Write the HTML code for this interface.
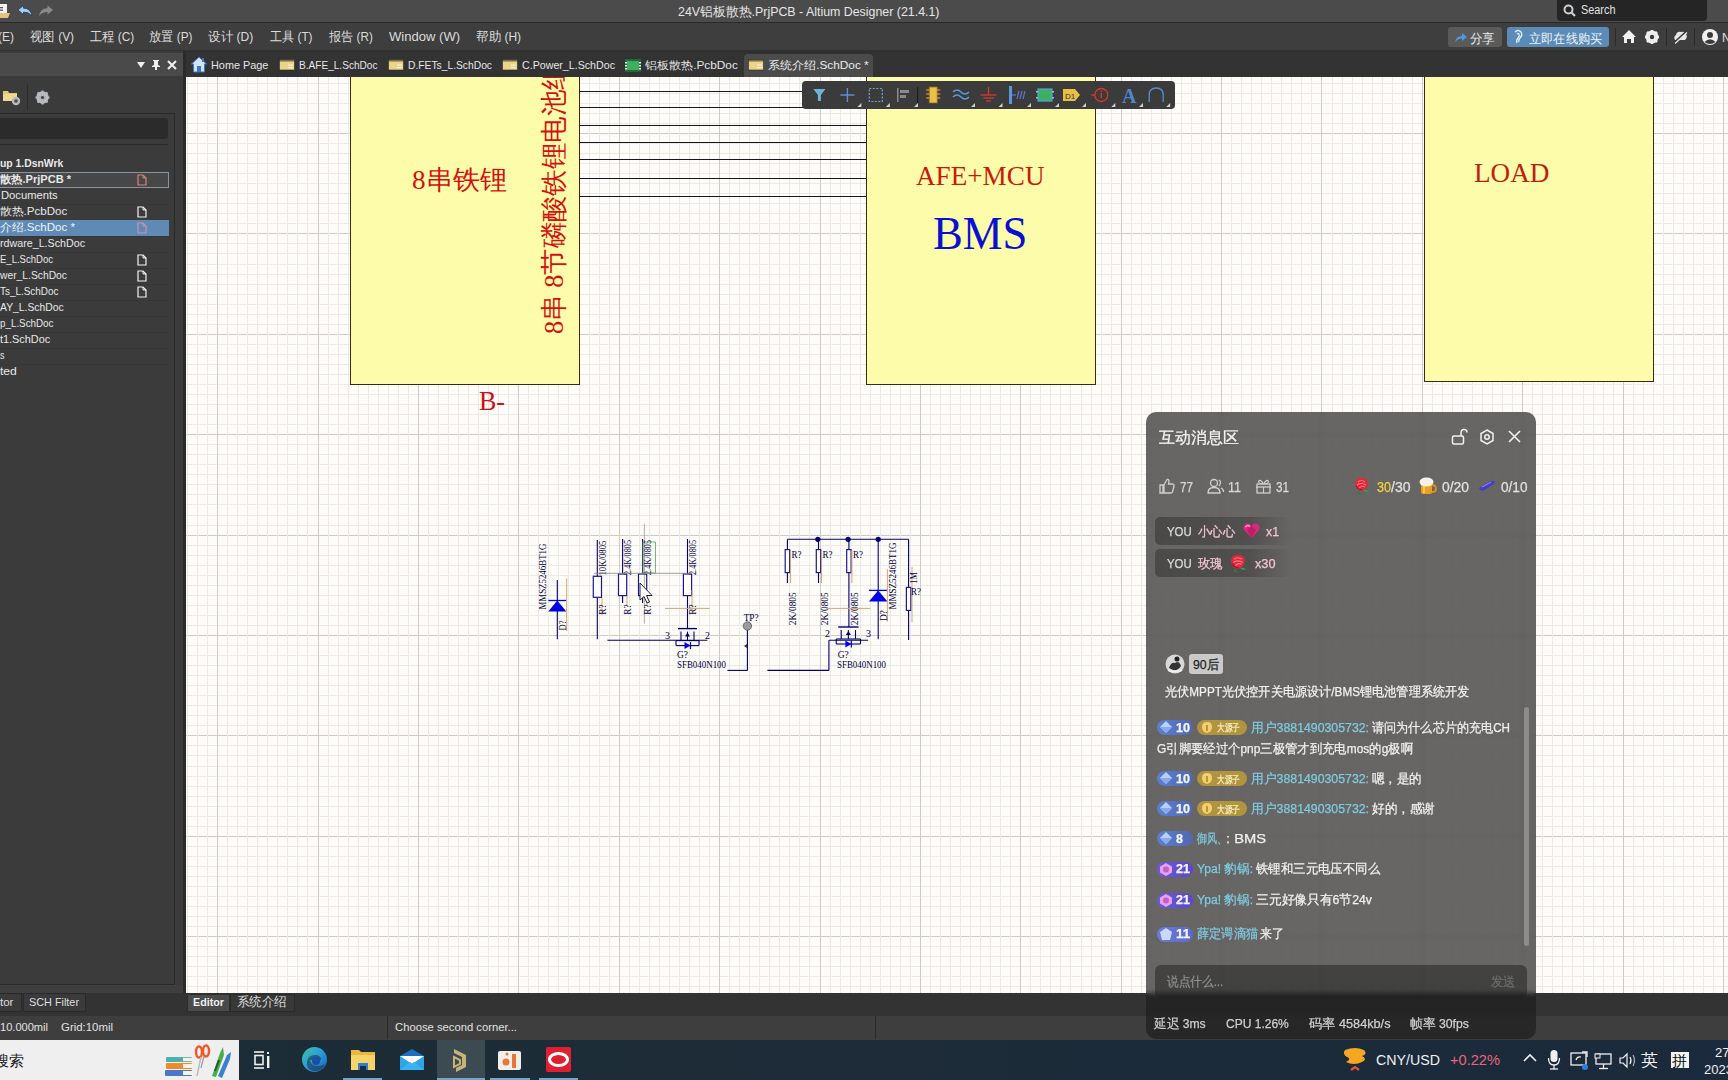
<!DOCTYPE html>
<html><head><meta charset="utf-8">
<style>
*{box-sizing:border-box;margin:0;padding:0}
html,body{width:1728px;height:1080px;overflow:hidden;background:#333;font-family:"Liberation Sans",sans-serif;color:#ddd}
.a{position:absolute}
.t{position:absolute;white-space:nowrap;line-height:1}
.serif{font-family:"Liberation Serif",serif}
</style></head><body>
<div class="a" style="left:0px;top:0px;width:1728px;height:22px;background:#4b4b4b"></div><div class="a" style="left:0px;top:22px;width:1728px;height:1px;background:#2a2a2a"></div><div class="t" style="transform:scaleX(0.9909);transform-origin:0 0;left:678.00px;top:5.82px;font-family:'Liberation Sans',sans-serif;font-size:12.5px;font-weight:normal;color:#e6e6e6;">24V铝板散热.PrjPCB - Altium Designer (21.4.1)</div><div class="a" style="left:1557px;top:0px;width:150px;height:20.5px;background:#252525;border-radius:0 0 4px 4px"></div><svg class="a" style="left:1563px;top:4px" width="13" height="13"><circle cx="5.5" cy="5.5" r="4" stroke="#cfcfcf" stroke-width="2" fill="none"/><line x1="8.5" y1="8.5" x2="12" y2="12" stroke="#cfcfcf" stroke-width="2.2"/></svg><div class="t" style="transform:scaleX(0.9071);transform-origin:0 0;left:1580.50px;top:4.04px;font-family:'Liberation Sans',sans-serif;font-size:12px;font-weight:normal;color:#e0e0e0;">Search</div><div class="a" style="left:0px;top:23px;width:1728px;height:26.5px;background:#3e3e3e"></div><div class="t" style="transform:scaleX(0.9597);transform-origin:0 0;left:-2.00px;top:31.12px;font-family:'Liberation Sans',sans-serif;font-size:12.5px;font-weight:normal;color:#dcdcdc;">(E)</div><div class="t" style="transform:scaleX(0.9558);transform-origin:0 0;left:29.50px;top:31.12px;font-family:'Liberation Sans',sans-serif;font-size:12.5px;font-weight:normal;color:#dcdcdc;">视图 (V)</div><div class="t" style="transform:scaleX(0.9417);transform-origin:0 0;left:89.60px;top:31.12px;font-family:'Liberation Sans',sans-serif;font-size:12.5px;font-weight:normal;color:#dcdcdc;">工程 (C)</div><div class="t" style="transform:scaleX(0.9406);transform-origin:0 0;left:149.30px;top:31.12px;font-family:'Liberation Sans',sans-serif;font-size:12.5px;font-weight:normal;color:#dcdcdc;">放置 (P)</div><div class="t" style="transform:scaleX(0.9652);transform-origin:0 0;left:208.30px;top:31.12px;font-family:'Liberation Sans',sans-serif;font-size:12.5px;font-weight:normal;color:#dcdcdc;">设计 (D)</div><div class="t" style="transform:scaleX(0.9354);transform-origin:0 0;left:270.00px;top:31.12px;font-family:'Liberation Sans',sans-serif;font-size:12.5px;font-weight:normal;color:#dcdcdc;">工具 (T)</div><div class="t" style="transform:scaleX(0.9353);transform-origin:0 0;left:328.80px;top:31.12px;font-family:'Liberation Sans',sans-serif;font-size:12.5px;font-weight:normal;color:#dcdcdc;">报告 (R)</div><div class="t" style="transform:scaleX(1.0446);transform-origin:0 0;left:388.90px;top:31.12px;font-family:'Liberation Sans',sans-serif;font-size:12.5px;font-weight:normal;color:#dcdcdc;">Window (W)</div><div class="t" style="transform:scaleX(0.9631);transform-origin:0 0;left:475.70px;top:31.12px;font-family:'Liberation Sans',sans-serif;font-size:12.5px;font-weight:normal;color:#dcdcdc;">帮助 (H)</div><div class="a" style="left:0px;top:49.5px;width:1728px;height:28.5px;background:#333333"></div><div class="a" style="left:0px;top:49.5px;width:1728px;height:3.5px;background:#303030"></div><svg class="a" style="left:0;top:2px" width="60" height="18"><rect x="-3" y="2" width="10" height="9" fill="#f4f4f4"/><rect x="-2" y="5" width="5" height="1.3" fill="#555"/><rect x="-2" y="7.5" width="5" height="1.3" fill="#555"/><path d="M-3 11 L10 11 L8 16 L-3 16 Z" fill="#e6c27a"/><path d="M18 8 L23.5 3.5 L23.5 6.2 Q30.5 6 32 14 Q29 10 23.5 10 L23.5 12.5 Z" fill="#a9cdf2" stroke="#1d3f6a" stroke-width="0.8"/><path d="M53 8 L47.5 3.5 L47.5 6.2 Q40.5 6 39 14 Q42 10 47.5 10 L47.5 12.5 Z" fill="#8a8a8a"/></svg><div class="a" style="left:1448px;top:27px;width:54px;height:20px;background:#5a5a5a;border-radius:3px"></div><svg class="a" style="left:1454px;top:31px" width="14" height="12"><path d="M1 11 Q2 5 8 5 L8 2 L13 6 L8 10 L8 7.5 Q4 7.5 1 11Z" fill="#4d9be0"/></svg><div class="t" style="transform:scaleX(0.9615);transform-origin:0 0;left:1470.00px;top:31.50px;font-family:'Liberation Sans',sans-serif;font-size:13px;font-weight:normal;color:#e8e8e8;">分享</div><div class="a" style="left:1507px;top:27px;width:102px;height:20px;background:#5b8cb7;border-radius:3px"></div><svg class="a" style="left:1512px;top:29px" width="12" height="16"><path d="M3 3 Q6 0 9 3 Q11 6 8 9 Q6 11 7 13 M5 5 Q6 4 7 5 Q8 7 6 9 Q4 11 5 14" stroke="#e8eef5" stroke-width="1.3" fill="none"/></svg><div class="t" style="transform:scaleX(0.9359);transform-origin:0 0;left:1529.00px;top:31.50px;font-family:'Liberation Sans',sans-serif;font-size:13px;font-weight:normal;color:#eef3f8;">立即在线购买</div><div class="a" style="left:1615px;top:28px;width:1px;height:18px;background:#2a2a2a"></div><div class="a" style="left:1666px;top:28px;width:1px;height:18px;background:#2a2a2a"></div><div class="a" style="left:1694px;top:28px;width:1px;height:18px;background:#2a2a2a"></div><svg class="a" style="left:1621px;top:29px" width="16" height="15"><path d="M8 1 L15 8 L13 8 L13 14 L10 14 L10 10 L6 10 L6 14 L3 14 L3 8 L1 8 Z" fill="#f0f0f0"/></svg><svg class="a" style="left:1644px;top:29px" width="16" height="16"><circle cx="8" cy="8" r="5" fill="none" stroke="#f0f0f0" stroke-width="3"/><g stroke="#f0f0f0" stroke-width="2.6"><line x1="8" y1="1" x2="8" y2="15"/><line x1="1" y1="8" x2="15" y2="8"/><line x1="3" y1="3" x2="13" y2="13"/><line x1="13" y1="3" x2="3" y2="13"/></g><circle cx="8" cy="8" r="2.2" fill="#3a3a3a"/></svg><svg class="a" style="left:1672px;top:29px" width="17" height="16"><path d="M3 11 Q1 8 4 6 Q5 2 9 3 Q12 2 14 5 Q16 8 13 11 Z" fill="#e8e8e8"/><line x1="2" y1="14" x2="15" y2="2" stroke="#3a3a3a" stroke-width="2.2"/><line x1="3" y1="14.5" x2="15" y2="3.5" stroke="#e8e8e8" stroke-width="1.3"/></svg><svg class="a" style="left:1701px;top:28px" width="18" height="18"><circle cx="9" cy="9" r="8" fill="#f0f0f0"/><circle cx="9" cy="7" r="3" fill="#3a3a3a"/><path d="M3.5 14 Q9 8.5 14.5 14 Q9 18 3.5 14Z" fill="#3a3a3a"/></svg><div class="t" style="left:1722.00px;top:31.84px;font-family:'Liberation Sans',sans-serif;font-size:12px;font-weight:normal;color:#e0e0e0;">N</div><svg class="a" style="left:191px;top:56px" width="16" height="17"><path d="M8 1 L15.5 8 L13.5 8 L13.5 16 L2.5 16 L2.5 8 L0.5 8 Z" fill="#cfe3f7" stroke="#3c78c0" stroke-width="1"/><rect x="6" y="10" width="4" height="6" fill="#3c78c0"/><rect x="11" y="2" width="2" height="4" fill="#3c78c0"/></svg><div class="t" style="transform:scaleX(1.0065);transform-origin:0 0;left:211.00px;top:59.86px;font-family:'Liberation Sans',sans-serif;font-size:10.8px;font-weight:normal;color:#e6e6e6;">Home Page</div><svg class="a" style="left:279px;top:59px" width="16" height="12"><rect x="0.5" y="0.5" width="15" height="10.5" fill="#ead48c" stroke="#2a2a20" stroke-width="0.6"/><rect x="9" y="5.5" width="5" height="1.2" fill="#f8f0d0"/><rect x="9" y="8" width="5" height="1.2" fill="#f8f0d0"/><rect x="0.5" y="0.5" width="15" height="2" fill="#2a2a20" opacity="0.6"/></svg><div class="t" style="transform:scaleX(0.9344);transform-origin:0 0;left:299.30px;top:59.86px;font-family:'Liberation Sans',sans-serif;font-size:10.8px;font-weight:normal;color:#e6e6e6;">B.AFE_L.SchDoc</div><svg class="a" style="left:388px;top:59px" width="16" height="12"><rect x="0.5" y="0.5" width="15" height="10.5" fill="#ead48c" stroke="#2a2a20" stroke-width="0.6"/><rect x="9" y="5.5" width="5" height="1.2" fill="#f8f0d0"/><rect x="9" y="8" width="5" height="1.2" fill="#f8f0d0"/><rect x="0.5" y="0.5" width="15" height="2" fill="#2a2a20" opacity="0.6"/></svg><div class="t" style="transform:scaleX(0.9522);transform-origin:0 0;left:408.00px;top:59.86px;font-family:'Liberation Sans',sans-serif;font-size:10.8px;font-weight:normal;color:#e6e6e6;">D.FETs_L.SchDoc</div><svg class="a" style="left:502px;top:59px" width="16" height="12"><rect x="0.5" y="0.5" width="15" height="10.5" fill="#ead48c" stroke="#2a2a20" stroke-width="0.6"/><rect x="9" y="5.5" width="5" height="1.2" fill="#f8f0d0"/><rect x="9" y="8" width="5" height="1.2" fill="#f8f0d0"/><rect x="0.5" y="0.5" width="15" height="2" fill="#2a2a20" opacity="0.6"/></svg><div class="t" style="transform:scaleX(0.9871);transform-origin:0 0;left:521.90px;top:59.86px;font-family:'Liberation Sans',sans-serif;font-size:10.8px;font-weight:normal;color:#e6e6e6;">C.Power_L.SchDoc</div><svg class="a" style="left:625px;top:59px" width="16" height="13"><rect x="0" y="0" width="16" height="13" fill="#1d6b3a"/><rect x="2" y="2" width="12" height="9" fill="#3fae5f"/><g fill="#e9f5e9"><rect x="0" y="3" width="2" height="1.5"/><rect x="0" y="6" width="2" height="1.5"/><rect x="0" y="9" width="2" height="1.5"/><rect x="14" y="3" width="2" height="1.5"/><rect x="14" y="6" width="2" height="1.5"/><rect x="14" y="9" width="2" height="1.5"/></g></svg><div class="t" style="transform:scaleX(1.0942);transform-origin:0 0;left:645.00px;top:59.86px;font-family:'Liberation Sans',sans-serif;font-size:10.8px;font-weight:normal;color:#e6e6e6;">铝板散热.PcbDoc</div><div class="a" style="left:744px;top:54px;width:129px;height:23.5px;background:#4b4b4b;border-radius:4px 4px 0 0"></div><svg class="a" style="left:748px;top:59px" width="16" height="12"><rect x="0.5" y="0.5" width="15" height="10.5" fill="#ead48c" stroke="#2a2a20" stroke-width="0.6"/><rect x="9" y="5.5" width="5" height="1.2" fill="#f8f0d0"/><rect x="9" y="8" width="5" height="1.2" fill="#f8f0d0"/><rect x="0.5" y="0.5" width="15" height="2" fill="#2a2a20" opacity="0.6"/></svg><div class="t" style="transform:scaleX(1.0944);transform-origin:0 0;left:767.60px;top:59.86px;font-family:'Liberation Sans',sans-serif;font-size:10.8px;font-weight:normal;color:#ececec;">系统介绍.SchDoc *</div><div class="a" style="left:0px;top:50.5px;width:183px;height:942px;background:#3b3b3b"></div><div class="a" style="left:0px;top:53px;width:183px;height:23px;background:#4a4a4a"></div><div class="a" style="left:183px;top:50.5px;width:3px;height:942px;background:#2b2b2b"></div><svg class="a" style="left:134px;top:59px" width="46" height="12"><path d="M3 3 L11 3 L7 9 Z" fill="#f0f0f0"/><path d="M19 1 L25 1 L25 2 L24 2 L24 6 L26 7 L26 8 L23 8 L23 11 L21 11 L21 8 L18 8 L18 7 L20 6 L20 2 L19 2 Z" fill="#f0f0f0"/><path d="M34 2 L42 10 M42 2 L34 10" stroke="#f0f0f0" stroke-width="2"/></svg><svg class="a" style="left:2px;top:88px" width="20" height="18"><path d="M1 3 L6 3 L7 5 L15 5 L15 13 L1 13 Z" fill="#e2c779"/><rect x="1" y="6" width="14" height="7" fill="#f0d88f"/><circle cx="14" cy="13" r="4.2" fill="#b9b9b9"/><circle cx="14" cy="13" r="1.8" fill="#4a4a4a"/></svg><div class="a" style="left:27px;top:84px;width:1px;height:26px;background:#2c2c2c"></div><svg class="a" style="left:35px;top:90px" width="15" height="15"><circle cx="7.5" cy="7.5" r="4.6" fill="none" stroke="#b7bcbf" stroke-width="3.2"/><g stroke="#b7bcbf" stroke-width="2"><line x1="7.5" y1="0.5" x2="7.5" y2="14.5"/><line x1="0.5" y1="7.5" x2="14.5" y2="7.5"/><line x1="2.5" y1="2.5" x2="12.5" y2="12.5"/><line x1="12.5" y1="2.5" x2="2.5" y2="12.5"/></g><circle cx="7.5" cy="7.5" r="1.6" fill="#3b3b3b"/></svg><div class="a" style="left:-1px;top:113px;width:176px;height:872px;border:1px solid #2a2a2a"></div><div class="a" style="left:0px;top:118px;width:168px;height:21px;background:#2b2b2b;border-radius:0 3px 3px 0"></div><div class="a" style="left:0px;top:144px;width:168px;height:1px;background:#2c2c2c"></div><div class="t" style="transform:scaleX(0.9621);transform-origin:0 0;left:0.00px;top:157.86px;font-family:'Liberation Sans',sans-serif;font-size:10.8px;font-weight:bold;color:#e8e8e8;">up 1.DsnWrk</div><div class="a" style="left:0px;top:172px;width:169px;height:16px;background:#474747;border:1px solid #8896a2;border-left:none"></div><div class="t" style="transform:scaleX(1.0230);transform-origin:0 0;left:0.00px;top:173.86px;font-family:'Liberation Sans',sans-serif;font-size:10.8px;font-weight:bold;color:#e8e8e8;">散热.PrjPCB *</div><svg class="a" style="left:137px;top:173.5px" width="10" height="12"><path d="M1 1 L6 1 L9 4 L9 11 L1 11 Z" fill="none" stroke="#d9837f" stroke-width="1.2"/><path d="M6 1 L6 4 L9 4" fill="none" stroke="#d9837f" stroke-width="1"/></svg><div class="a" style="left:0px;top:204px;width:168px;height:1px;background:#373737"></div><div class="t" style="transform:scaleX(1.0383);transform-origin:0 0;left:0.50px;top:189.86px;font-family:'Liberation Sans',sans-serif;font-size:10.8px;font-weight:normal;color:#e8e8e8;">Documents</div><div class="a" style="left:0px;top:220px;width:168px;height:1px;background:#373737"></div><div class="t" style="transform:scaleX(1.0714);transform-origin:0 0;left:0.00px;top:205.86px;font-family:'Liberation Sans',sans-serif;font-size:10.8px;font-weight:normal;color:#e8e8e8;">散热.PcbDoc</div><svg class="a" style="left:137px;top:205.5px" width="10" height="12"><path d="M1 1 L6 1 L9 4 L9 11 L1 11 Z" fill="none" stroke="#f2f2f2" stroke-width="1.2"/><path d="M6 1 L6 4 L9 4" fill="none" stroke="#f2f2f2" stroke-width="1"/></svg><div class="a" style="left:0px;top:220px;width:169px;height:16px;background:#5f8ab4"></div><div class="a" style="left:0px;top:236px;width:168px;height:1px;background:#373737"></div><div class="t" style="transform:scaleX(1.0712);transform-origin:0 0;left:0.00px;top:221.86px;font-family:'Liberation Sans',sans-serif;font-size:10.8px;font-weight:normal;color:#eef4fa;">介绍.SchDoc *</div><svg class="a" style="left:137px;top:221.5px" width="10" height="12"><path d="M1 1 L6 1 L9 4 L9 11 L1 11 Z" fill="none" stroke="#c793b6" stroke-width="1.2"/><path d="M6 1 L6 4 L9 4" fill="none" stroke="#c793b6" stroke-width="1"/></svg><div class="a" style="left:0px;top:252px;width:168px;height:1px;background:#373737"></div><div class="t" style="transform:scaleX(0.9904);transform-origin:0 0;left:0.00px;top:237.86px;font-family:'Liberation Sans',sans-serif;font-size:10.8px;font-weight:normal;color:#e8e8e8;">rdware_L.SchDoc</div><div class="a" style="left:0px;top:268px;width:168px;height:1px;background:#373737"></div><div class="t" style="transform:scaleX(0.8831);transform-origin:0 0;left:0.00px;top:253.86px;font-family:'Liberation Sans',sans-serif;font-size:10.8px;font-weight:normal;color:#e8e8e8;">E_L.SchDoc</div><svg class="a" style="left:137px;top:253.5px" width="10" height="12"><path d="M1 1 L6 1 L9 4 L9 11 L1 11 Z" fill="none" stroke="#f2f2f2" stroke-width="1.2"/><path d="M6 1 L6 4 L9 4" fill="none" stroke="#f2f2f2" stroke-width="1"/></svg><div class="a" style="left:0px;top:284px;width:168px;height:1px;background:#373737"></div><div class="t" style="transform:scaleX(0.9542);transform-origin:0 0;left:0.00px;top:269.86px;font-family:'Liberation Sans',sans-serif;font-size:10.8px;font-weight:normal;color:#e8e8e8;">wer_L.SchDoc</div><svg class="a" style="left:137px;top:269.5px" width="10" height="12"><path d="M1 1 L6 1 L9 4 L9 11 L1 11 Z" fill="none" stroke="#f2f2f2" stroke-width="1.2"/><path d="M6 1 L6 4 L9 4" fill="none" stroke="#f2f2f2" stroke-width="1"/></svg><div class="a" style="left:0px;top:300px;width:168px;height:1px;background:#373737"></div><div class="t" style="transform:scaleX(0.9179);transform-origin:0 0;left:0.00px;top:285.86px;font-family:'Liberation Sans',sans-serif;font-size:10.8px;font-weight:normal;color:#e8e8e8;">Ts_L.SchDoc</div><svg class="a" style="left:137px;top:285.5px" width="10" height="12"><path d="M1 1 L6 1 L9 4 L9 11 L1 11 Z" fill="none" stroke="#f2f2f2" stroke-width="1.2"/><path d="M6 1 L6 4 L9 4" fill="none" stroke="#f2f2f2" stroke-width="1"/></svg><div class="a" style="left:0px;top:316px;width:168px;height:1px;background:#373737"></div><div class="t" style="transform:scaleX(0.9575);transform-origin:0 0;left:0.00px;top:301.86px;font-family:'Liberation Sans',sans-serif;font-size:10.8px;font-weight:normal;color:#e8e8e8;">AY_L.SchDoc</div><div class="a" style="left:0px;top:332px;width:168px;height:1px;background:#373737"></div><div class="t" style="transform:scaleX(0.9094);transform-origin:0 0;left:0.00px;top:317.86px;font-family:'Liberation Sans',sans-serif;font-size:10.8px;font-weight:normal;color:#e8e8e8;">p_L.SchDoc</div><div class="a" style="left:0px;top:348px;width:168px;height:1px;background:#373737"></div><div class="t" style="transform:scaleX(1.0078);transform-origin:0 0;left:0.00px;top:333.86px;font-family:'Liberation Sans',sans-serif;font-size:10.8px;font-weight:normal;color:#e8e8e8;">t1.SchDoc</div><div class="a" style="left:0px;top:364px;width:168px;height:1px;background:#373737"></div><div class="t" style="transform:scaleX(0.8324);transform-origin:0 0;left:0.00px;top:349.86px;font-family:'Liberation Sans',sans-serif;font-size:10.8px;font-weight:normal;color:#e8e8e8;">s</div><div class="t" style="transform:scaleX(1.1188);transform-origin:0 0;left:0.00px;top:365.86px;font-family:'Liberation Sans',sans-serif;font-size:10.8px;font-weight:normal;color:#e8e8e8;">ted</div><div class="a" style="left:0px;top:993px;width:1728px;height:23px;background:#333333"></div><div class="a" style="left:0px;top:985px;width:183px;height:8px;background:#3e3e3e"></div><div class="a" style="left:-2px;top:993px;width:24px;height:18.5px;background:#3a3a3a;border:1px solid #2a2a2a"></div><div class="t" style="left:0.00px;top:996.77px;font-family:'Liberation Sans',sans-serif;font-size:11.5px;font-weight:normal;color:#dedede;">tor</div><div class="a" style="left:22.5px;top:993px;width:63px;height:18.5px;background:#3a3a3a;border:1px solid #2a2a2a"></div><div class="t" style="transform:scaleX(0.9428);transform-origin:0 0;left:29.00px;top:996.77px;font-family:'Liberation Sans',sans-serif;font-size:11.5px;font-weight:normal;color:#dedede;">SCH Filter</div><div class="a" style="left:186.5px;top:994px;width:43.5px;height:17.5px;background:#4a4a4a;border:1px solid #2e2e2e"></div><div class="t" style="transform:scaleX(0.9328);transform-origin:0 0;left:193.00px;top:997.07px;font-family:'Liberation Sans',sans-serif;font-size:11.5px;font-weight:bold;color:#f0f0f0;">Editor</div><div class="a" style="left:230px;top:994px;width:65px;height:17.5px;background:#383838;border:1px solid #2a2a2a"></div><div class="t" style="transform:scaleX(0.9615);transform-origin:0 0;left:237.00px;top:996.42px;font-family:'Liberation Sans',sans-serif;font-size:12.5px;font-weight:normal;color:#dcdcdc;">系统介绍</div><div class="a" style="left:0px;top:1015.5px;width:1728px;height:24.5px;background:#3e3e3e"></div><div class="t" style="transform:scaleX(0.9624);transform-origin:0 0;left:0.00px;top:1021.77px;font-family:'Liberation Sans',sans-serif;font-size:11.5px;font-weight:normal;color:#e2e2e2;">10.000mil</div><div class="t" style="transform:scaleX(0.9922);transform-origin:0 0;left:60.50px;top:1021.77px;font-family:'Liberation Sans',sans-serif;font-size:11.5px;font-weight:normal;color:#e2e2e2;">Grid:10mil</div><div class="a" style="left:387px;top:1016px;width:1px;height:23px;background:#2a2a2a"></div><div class="a" style="left:875px;top:1016px;width:1px;height:23px;background:#2a2a2a"></div><div class="t" style="transform:scaleX(0.9786);transform-origin:0 0;left:394.60px;top:1021.77px;font-family:'Liberation Sans',sans-serif;font-size:11.5px;font-weight:normal;color:#e2e2e2;">Choose second corner...</div><div class="a" style="left:0px;top:1040px;width:1728px;height:40px;background:linear-gradient(90deg,#1c2d36 0%,#1d2c38 50%,#1b2a3c 100%)"></div><div class="a" style="left:0px;top:1040px;width:239px;height:40px;background:#efefef"></div><div class="t" style="left:-6.00px;top:1053.30px;font-family:'Liberation Sans',sans-serif;font-size:15px;font-weight:normal;color:#222;">搜索</div><svg class="a" style="left:163px;top:1043px" width="72" height="36"><g transform="translate(2,14)"><rect x="1" y="0" width="26" height="5" rx="1" fill="#4bb0b0"/><rect x="18" y="0.8" width="10" height="3.4" fill="#f5f2e6"/><rect x="1" y="6" width="26" height="6" rx="1" fill="#ee8a2a"/><rect x="18" y="7" width="10" height="4" fill="#f5f2e6"/><rect x="0" y="13" width="27" height="6" rx="1" fill="#4a78c8"/><rect x="18" y="14" width="10" height="4" fill="#f5f2e6"/></g><g fill="none" stroke="#ee5a2a" stroke-width="2.5"><ellipse cx="36" cy="9" rx="3" ry="5.5"/><ellipse cx="43" cy="8" rx="3" ry="5.5"/></g><path d="M38 14 L34 33" stroke="#bbb" stroke-width="1.5"/><path d="M41 13 L38 25" stroke="#999" stroke-width="1.2"/><path d="M49 33 L57 10 L60 4 L61 12 L53 34 Z" fill="#46b04a"/><path d="M55 33 L64 12 L68 9 L67 16 L59 35 Z" fill="#3a7fd0"/><path d="M52 28 L56 17" stroke="#2a5a2a" stroke-width="2"/></svg><svg class="a" style="left:253px;top:1051px" width="20" height="18"><g fill="none" stroke="#f0f0f0" stroke-width="1.6"><path d="M1 1 L11 1"/><path d="M1 17 L11 17"/><rect x="2" y="4.5" width="8" height="9"/></g><rect x="14" y="1" width="2" height="2" fill="#f0f0f0"/><rect x="14" y="5" width="2.4" height="12" fill="#f0f0f0"/></svg><svg class="a" style="left:301px;top:1046px" width="27" height="27"><defs><linearGradient id="eg" x1="0" y1="0" x2="1" y2="1"><stop offset="0" stop-color="#3cc7a0"/><stop offset="0.5" stop-color="#2a9ad8"/><stop offset="1" stop-color="#1a5fc0"/></linearGradient></defs><circle cx="13.5" cy="13.5" r="12.5" fill="url(#eg)"/><path d="M6 16 Q7 9 14 9 Q20 9 20 14 L9 14 Q10 20 17 20 Q21 20 24 18 Q21 26 12 25 Q5 23 6 16Z" fill="#1d2c36" opacity="0.55"/><circle cx="15" cy="15" r="4" fill="#1a4fa8"/></svg><svg class="a" style="left:350px;top:1048px" width="26" height="24"><path d="M1 2 L9 2 L11 4 L25 4 L25 22 L1 22 Z" fill="#e8b740"/><rect x="1" y="7" width="24" height="15" fill="#f6d46a"/><rect x="8" y="15" width="10" height="7" fill="#2a7fd0"/><rect x="10" y="18" width="6" height="4" fill="#1d2c36"/></svg><div class="a" style="left:343px;top:1077.5px;width:39px;height:2.5px;background:#76a4cf"></div><svg class="a" style="left:399px;top:1048px" width="26" height="23"><path d="M1 8 L13 1 L25 8 L25 22 L1 22 Z" fill="#1e6fc0"/><path d="M1 8 L25 8 L25 22 L1 22 Z" fill="#2fa3ea"/><path d="M1 8 L13 16 L25 8" fill="#ffffff"/><path d="M1 22 L11 14 L13 15.5 L15 14 L25 22Z" fill="#3ab4f0"/></svg><div class="a" style="left:437px;top:1040px;width:48px;height:40px;background:#3c4a52"></div><svg class="a" style="left:449px;top:1047px" width="24" height="26"><path d="M5 2 L17 8 L17 20 L7 25 L7 21 L13 18 L13 10 L5 6 Z" fill="#c8b27a"/><path d="M5 10 L11 13 L11 17 L5 20 Z" fill="none" stroke="#c8b27a" stroke-width="2"/></svg><div class="a" style="left:437px;top:1077.5px;width:48px;height:2.5px;background:#76a4cf"></div><svg class="a" style="left:497px;top:1049px" width="25" height="22"><rect x="1" y="2" width="23" height="19" rx="2" fill="#f2efe9"/><circle cx="9" cy="13" r="3.5" fill="#e8753a"/><rect x="15" y="5" width="4" height="14" fill="#e8753a"/><circle cx="10" cy="5" r="1.5" fill="#e8753a"/></svg><div class="a" style="left:490px;top:1077.5px;width:40px;height:2.5px;background:#76a4cf"></div><svg class="a" style="left:546px;top:1047px" width="25" height="25"><rect x="0" y="0" width="25" height="25" rx="2" fill="#e02030"/><ellipse cx="12.5" cy="12.5" rx="9" ry="6" fill="none" stroke="#fff" stroke-width="3"/></svg><div class="a" style="left:539px;top:1077.5px;width:39px;height:2.5px;background:#76a4cf"></div><svg class="a" style="left:1342px;top:1046px" width="26" height="30"><path d="M3 4 Q13 0 22 4 Q26 8 20 10 Q26 13 20 16 Q12 20 4 16 Q10 13 5 11 Q0 8 3 4Z" fill="#f5a623"/><path d="M9 24 L13 21 L17 24" fill="none" stroke="#e0523a" stroke-width="2.2"/></svg><div class="t" style="transform:scaleX(0.9479);transform-origin:0 0;left:1376.00px;top:1052.30px;font-family:'Liberation Sans',sans-serif;font-size:15px;font-weight:normal;color:#f0f0f0;">CNY/USD</div><div class="t" style="transform:scaleX(0.9747);transform-origin:0 0;left:1450.00px;top:1052.30px;font-family:'Liberation Sans',sans-serif;font-size:15px;font-weight:normal;color:#e8667a;">+0.22%</div><svg class="a" style="left:1522px;top:1053px" width="16" height="10"><path d="M2 8 L8 2 L14 8" fill="none" stroke="#f0f0f0" stroke-width="1.6"/></svg><svg class="a" style="left:1547px;top:1049px" width="14" height="22"><rect x="3.5" y="1" width="7" height="12" rx="3.5" fill="#f0f0f0"/><path d="M1.5 9 Q1.5 16 7 16 Q12.5 16 12.5 9" fill="none" stroke="#f0f0f0" stroke-width="1.3"/><line x1="7" y1="16" x2="7" y2="20" stroke="#f0f0f0" stroke-width="1.3"/><line x1="3" y1="20" x2="11" y2="20" stroke="#f0f0f0" stroke-width="1.3"/></svg><svg class="a" style="left:1570px;top:1051px" width="20" height="20"><rect x="1" y="2" width="15" height="12" fill="none" stroke="#f0f0f0" stroke-width="1.3"/><path d="M12 1 L17 1 L17 6" fill="none" stroke="#f0f0f0" stroke-width="1.3"/><path d="M6 9 Q7 5 11 6" fill="none" stroke="#f0f0f0" stroke-width="1.2"/><circle cx="15" cy="16" r="3" fill="#2f7de0"/></svg><svg class="a" style="left:1594px;top:1052px" width="20" height="18"><rect x="2" y="2" width="15" height="10" fill="none" stroke="#f0f0f0" stroke-width="1.3"/><rect x="1" y="2" width="5" height="4" fill="#1b2a3c" stroke="#f0f0f0" stroke-width="1"/><line x1="9.5" y1="12" x2="9.5" y2="16" stroke="#f0f0f0" stroke-width="1.3"/><line x1="5" y1="16.5" x2="14" y2="16.5" stroke="#f0f0f0" stroke-width="1.3"/></svg><svg class="a" style="left:1618px;top:1052px" width="20" height="17"><path d="M2 6 L5 6 L9 2 L9 15 L5 11 L2 11 Z" fill="none" stroke="#f0f0f0" stroke-width="1.2"/><path d="M12 5 Q14 8.5 12 12" fill="none" stroke="#f0f0f0" stroke-width="1.2"/><path d="M15 3 Q18 8.5 15 14" fill="none" stroke="#b0b0b0" stroke-width="1.2"/></svg><div class="t" style="left:1641.00px;top:1051.61px;font-family:'Liberation Sans',sans-serif;font-size:17px;font-weight:normal;color:#f0f0f0;">英</div><div class="a" style="left:1671px;top:1052px;width:18px;height:16px;background:#f4f4f4"></div><div class="t" style="left:1672.00px;top:1052.80px;font-family:'Liberation Sans',sans-serif;font-size:15px;font-weight:normal;color:#111;">拼</div><div class="t" style="left:1715.00px;top:1046.00px;font-family:'Liberation Sans',sans-serif;font-size:13px;font-weight:normal;color:#f0f0f0;">27</div><div class="t" style="left:1704.00px;top:1063.00px;font-family:'Liberation Sans',sans-serif;font-size:13px;font-weight:normal;color:#f0f0f0;">2023</div><div class="a" style="left:186px;top:77px;width:1542px;height:916px;background:#fdfcf9;overflow:hidden"><svg width="1542" height="916" style="position:absolute;left:0;top:0"><rect x="0" y="909" width="1542" height="1" fill="#edeae6"/><rect x="0" y="899" width="1542" height="1" fill="#edeae6"/><rect x="0" y="889" width="1542" height="1" fill="#edeae6"/><rect x="0" y="879" width="1542" height="1" fill="#edeae6"/><rect x="0" y="869" width="1542" height="1" fill="#edeae6"/><rect x="0" y="859" width="1542" height="1" fill="#cfccc7"/><rect x="0" y="849" width="1542" height="1" fill="#edeae6"/><rect x="0" y="839" width="1542" height="1" fill="#edeae6"/><rect x="0" y="829" width="1542" height="1" fill="#edeae6"/><rect x="0" y="819" width="1542" height="1" fill="#edeae6"/><rect x="0" y="809" width="1542" height="1" fill="#edeae6"/><rect x="0" y="799" width="1542" height="1" fill="#edeae6"/><rect x="0" y="789" width="1542" height="1" fill="#edeae6"/><rect x="0" y="779" width="1542" height="1" fill="#edeae6"/><rect x="0" y="769" width="1542" height="1" fill="#edeae6"/><rect x="0" y="759" width="1542" height="1" fill="#cfccc7"/><rect x="0" y="749" width="1542" height="1" fill="#edeae6"/><rect x="0" y="739" width="1542" height="1" fill="#edeae6"/><rect x="0" y="729" width="1542" height="1" fill="#edeae6"/><rect x="0" y="719" width="1542" height="1" fill="#edeae6"/><rect x="0" y="709" width="1542" height="1" fill="#edeae6"/><rect x="0" y="699" width="1542" height="1" fill="#edeae6"/><rect x="0" y="689" width="1542" height="1" fill="#edeae6"/><rect x="0" y="678" width="1542" height="1" fill="#edeae6"/><rect x="0" y="668" width="1542" height="1" fill="#edeae6"/><rect x="0" y="658" width="1542" height="1" fill="#cfccc7"/><rect x="0" y="648" width="1542" height="1" fill="#edeae6"/><rect x="0" y="638" width="1542" height="1" fill="#edeae6"/><rect x="0" y="628" width="1542" height="1" fill="#edeae6"/><rect x="0" y="618" width="1542" height="1" fill="#edeae6"/><rect x="0" y="608" width="1542" height="1" fill="#edeae6"/><rect x="0" y="598" width="1542" height="1" fill="#edeae6"/><rect x="0" y="588" width="1542" height="1" fill="#edeae6"/><rect x="0" y="578" width="1542" height="1" fill="#edeae6"/><rect x="0" y="568" width="1542" height="1" fill="#edeae6"/><rect x="0" y="558" width="1542" height="1" fill="#cfccc7"/><rect x="0" y="548" width="1542" height="1" fill="#edeae6"/><rect x="0" y="538" width="1542" height="1" fill="#edeae6"/><rect x="0" y="528" width="1542" height="1" fill="#edeae6"/><rect x="0" y="518" width="1542" height="1" fill="#edeae6"/><rect x="0" y="508" width="1542" height="1" fill="#edeae6"/><rect x="0" y="498" width="1542" height="1" fill="#edeae6"/><rect x="0" y="488" width="1542" height="1" fill="#edeae6"/><rect x="0" y="478" width="1542" height="1" fill="#edeae6"/><rect x="0" y="468" width="1542" height="1" fill="#edeae6"/><rect x="0" y="458" width="1542" height="1" fill="#cfccc7"/><rect x="0" y="448" width="1542" height="1" fill="#edeae6"/><rect x="0" y="438" width="1542" height="1" fill="#edeae6"/><rect x="0" y="427" width="1542" height="1" fill="#edeae6"/><rect x="0" y="417" width="1542" height="1" fill="#edeae6"/><rect x="0" y="407" width="1542" height="1" fill="#edeae6"/><rect x="0" y="397" width="1542" height="1" fill="#edeae6"/><rect x="0" y="387" width="1542" height="1" fill="#edeae6"/><rect x="0" y="377" width="1542" height="1" fill="#edeae6"/><rect x="0" y="367" width="1542" height="1" fill="#edeae6"/><rect x="0" y="357" width="1542" height="1" fill="#cfccc7"/><rect x="0" y="347" width="1542" height="1" fill="#edeae6"/><rect x="0" y="337" width="1542" height="1" fill="#edeae6"/><rect x="0" y="327" width="1542" height="1" fill="#edeae6"/><rect x="0" y="317" width="1542" height="1" fill="#edeae6"/><rect x="0" y="307" width="1542" height="1" fill="#edeae6"/><rect x="0" y="297" width="1542" height="1" fill="#edeae6"/><rect x="0" y="287" width="1542" height="1" fill="#edeae6"/><rect x="0" y="277" width="1542" height="1" fill="#edeae6"/><rect x="0" y="267" width="1542" height="1" fill="#edeae6"/><rect x="0" y="257" width="1542" height="1" fill="#cfccc7"/><rect x="0" y="247" width="1542" height="1" fill="#edeae6"/><rect x="0" y="237" width="1542" height="1" fill="#edeae6"/><rect x="0" y="227" width="1542" height="1" fill="#edeae6"/><rect x="0" y="217" width="1542" height="1" fill="#edeae6"/><rect x="0" y="207" width="1542" height="1" fill="#edeae6"/><rect x="0" y="197" width="1542" height="1" fill="#edeae6"/><rect x="0" y="187" width="1542" height="1" fill="#edeae6"/><rect x="0" y="176" width="1542" height="1" fill="#edeae6"/><rect x="0" y="166" width="1542" height="1" fill="#edeae6"/><rect x="0" y="156" width="1542" height="1" fill="#cfccc7"/><rect x="0" y="146" width="1542" height="1" fill="#edeae6"/><rect x="0" y="136" width="1542" height="1" fill="#edeae6"/><rect x="0" y="126" width="1542" height="1" fill="#edeae6"/><rect x="0" y="116" width="1542" height="1" fill="#edeae6"/><rect x="0" y="106" width="1542" height="1" fill="#edeae6"/><rect x="0" y="96" width="1542" height="1" fill="#edeae6"/><rect x="0" y="86" width="1542" height="1" fill="#edeae6"/><rect x="0" y="76" width="1542" height="1" fill="#edeae6"/><rect x="0" y="66" width="1542" height="1" fill="#edeae6"/><rect x="0" y="56" width="1542" height="1" fill="#cfccc7"/><rect x="0" y="46" width="1542" height="1" fill="#edeae6"/><rect x="0" y="36" width="1542" height="1" fill="#edeae6"/><rect x="0" y="26" width="1542" height="1" fill="#edeae6"/><rect x="0" y="16" width="1542" height="1" fill="#edeae6"/><rect x="0" y="6" width="1542" height="1" fill="#edeae6"/><rect x="1" y="0" width="1" height="916" fill="#edeae6"/><rect x="11" y="0" width="1" height="916" fill="#edeae6"/><rect x="21" y="0" width="1" height="916" fill="#edeae6"/><rect x="31" y="0" width="1" height="916" fill="#cfccc7"/><rect x="41" y="0" width="1" height="916" fill="#edeae6"/><rect x="51" y="0" width="1" height="916" fill="#edeae6"/><rect x="61" y="0" width="1" height="916" fill="#edeae6"/><rect x="71" y="0" width="1" height="916" fill="#edeae6"/><rect x="81" y="0" width="1" height="916" fill="#edeae6"/><rect x="91" y="0" width="1" height="916" fill="#edeae6"/><rect x="101" y="0" width="1" height="916" fill="#edeae6"/><rect x="111" y="0" width="1" height="916" fill="#edeae6"/><rect x="121" y="0" width="1" height="916" fill="#edeae6"/><rect x="132" y="0" width="1" height="916" fill="#cfccc7"/><rect x="142" y="0" width="1" height="916" fill="#edeae6"/><rect x="152" y="0" width="1" height="916" fill="#edeae6"/><rect x="162" y="0" width="1" height="916" fill="#edeae6"/><rect x="172" y="0" width="1" height="916" fill="#edeae6"/><rect x="182" y="0" width="1" height="916" fill="#edeae6"/><rect x="192" y="0" width="1" height="916" fill="#edeae6"/><rect x="202" y="0" width="1" height="916" fill="#edeae6"/><rect x="212" y="0" width="1" height="916" fill="#edeae6"/><rect x="222" y="0" width="1" height="916" fill="#edeae6"/><rect x="232" y="0" width="1" height="916" fill="#cfccc7"/><rect x="242" y="0" width="1" height="916" fill="#edeae6"/><rect x="252" y="0" width="1" height="916" fill="#edeae6"/><rect x="262" y="0" width="1" height="916" fill="#edeae6"/><rect x="272" y="0" width="1" height="916" fill="#edeae6"/><rect x="282" y="0" width="1" height="916" fill="#edeae6"/><rect x="292" y="0" width="1" height="916" fill="#edeae6"/><rect x="302" y="0" width="1" height="916" fill="#edeae6"/><rect x="312" y="0" width="1" height="916" fill="#edeae6"/><rect x="322" y="0" width="1" height="916" fill="#edeae6"/><rect x="332" y="0" width="1" height="916" fill="#cfccc7"/><rect x="342" y="0" width="1" height="916" fill="#edeae6"/><rect x="352" y="0" width="1" height="916" fill="#edeae6"/><rect x="362" y="0" width="1" height="916" fill="#edeae6"/><rect x="372" y="0" width="1" height="916" fill="#edeae6"/><rect x="382" y="0" width="1" height="916" fill="#edeae6"/><rect x="393" y="0" width="1" height="916" fill="#edeae6"/><rect x="403" y="0" width="1" height="916" fill="#edeae6"/><rect x="413" y="0" width="1" height="916" fill="#edeae6"/><rect x="423" y="0" width="1" height="916" fill="#edeae6"/><rect x="433" y="0" width="1" height="916" fill="#cfccc7"/><rect x="443" y="0" width="1" height="916" fill="#edeae6"/><rect x="453" y="0" width="1" height="916" fill="#edeae6"/><rect x="463" y="0" width="1" height="916" fill="#edeae6"/><rect x="473" y="0" width="1" height="916" fill="#edeae6"/><rect x="483" y="0" width="1" height="916" fill="#edeae6"/><rect x="493" y="0" width="1" height="916" fill="#edeae6"/><rect x="503" y="0" width="1" height="916" fill="#edeae6"/><rect x="513" y="0" width="1" height="916" fill="#edeae6"/><rect x="523" y="0" width="1" height="916" fill="#edeae6"/><rect x="533" y="0" width="1" height="916" fill="#cfccc7"/><rect x="543" y="0" width="1" height="916" fill="#edeae6"/><rect x="553" y="0" width="1" height="916" fill="#edeae6"/><rect x="563" y="0" width="1" height="916" fill="#edeae6"/><rect x="573" y="0" width="1" height="916" fill="#edeae6"/><rect x="583" y="0" width="1" height="916" fill="#edeae6"/><rect x="593" y="0" width="1" height="916" fill="#edeae6"/><rect x="603" y="0" width="1" height="916" fill="#edeae6"/><rect x="613" y="0" width="1" height="916" fill="#edeae6"/><rect x="623" y="0" width="1" height="916" fill="#edeae6"/><rect x="634" y="0" width="1" height="916" fill="#cfccc7"/><rect x="644" y="0" width="1" height="916" fill="#edeae6"/><rect x="654" y="0" width="1" height="916" fill="#edeae6"/><rect x="664" y="0" width="1" height="916" fill="#edeae6"/><rect x="674" y="0" width="1" height="916" fill="#edeae6"/><rect x="684" y="0" width="1" height="916" fill="#edeae6"/><rect x="694" y="0" width="1" height="916" fill="#edeae6"/><rect x="704" y="0" width="1" height="916" fill="#edeae6"/><rect x="714" y="0" width="1" height="916" fill="#edeae6"/><rect x="724" y="0" width="1" height="916" fill="#edeae6"/><rect x="734" y="0" width="1" height="916" fill="#cfccc7"/><rect x="744" y="0" width="1" height="916" fill="#edeae6"/><rect x="754" y="0" width="1" height="916" fill="#edeae6"/><rect x="764" y="0" width="1" height="916" fill="#edeae6"/><rect x="774" y="0" width="1" height="916" fill="#edeae6"/><rect x="784" y="0" width="1" height="916" fill="#edeae6"/><rect x="794" y="0" width="1" height="916" fill="#edeae6"/><rect x="804" y="0" width="1" height="916" fill="#edeae6"/><rect x="814" y="0" width="1" height="916" fill="#edeae6"/><rect x="824" y="0" width="1" height="916" fill="#edeae6"/><rect x="834" y="0" width="1" height="916" fill="#cfccc7"/><rect x="844" y="0" width="1" height="916" fill="#edeae6"/><rect x="854" y="0" width="1" height="916" fill="#edeae6"/><rect x="864" y="0" width="1" height="916" fill="#edeae6"/><rect x="874" y="0" width="1" height="916" fill="#edeae6"/><rect x="884" y="0" width="1" height="916" fill="#edeae6"/><rect x="895" y="0" width="1" height="916" fill="#edeae6"/><rect x="905" y="0" width="1" height="916" fill="#edeae6"/><rect x="915" y="0" width="1" height="916" fill="#edeae6"/><rect x="925" y="0" width="1" height="916" fill="#edeae6"/><rect x="935" y="0" width="1" height="916" fill="#cfccc7"/><rect x="945" y="0" width="1" height="916" fill="#edeae6"/><rect x="955" y="0" width="1" height="916" fill="#edeae6"/><rect x="965" y="0" width="1" height="916" fill="#edeae6"/><rect x="975" y="0" width="1" height="916" fill="#edeae6"/><rect x="985" y="0" width="1" height="916" fill="#edeae6"/><rect x="995" y="0" width="1" height="916" fill="#edeae6"/><rect x="1005" y="0" width="1" height="916" fill="#edeae6"/><rect x="1015" y="0" width="1" height="916" fill="#edeae6"/><rect x="1025" y="0" width="1" height="916" fill="#edeae6"/><rect x="1035" y="0" width="1" height="916" fill="#cfccc7"/><rect x="1045" y="0" width="1" height="916" fill="#edeae6"/><rect x="1055" y="0" width="1" height="916" fill="#edeae6"/><rect x="1065" y="0" width="1" height="916" fill="#edeae6"/><rect x="1075" y="0" width="1" height="916" fill="#edeae6"/><rect x="1085" y="0" width="1" height="916" fill="#edeae6"/><rect x="1095" y="0" width="1" height="916" fill="#edeae6"/><rect x="1105" y="0" width="1" height="916" fill="#edeae6"/><rect x="1115" y="0" width="1" height="916" fill="#edeae6"/><rect x="1125" y="0" width="1" height="916" fill="#edeae6"/><rect x="1135" y="0" width="1" height="916" fill="#cfccc7"/><rect x="1146" y="0" width="1" height="916" fill="#edeae6"/><rect x="1156" y="0" width="1" height="916" fill="#edeae6"/><rect x="1166" y="0" width="1" height="916" fill="#edeae6"/><rect x="1176" y="0" width="1" height="916" fill="#edeae6"/><rect x="1186" y="0" width="1" height="916" fill="#edeae6"/><rect x="1196" y="0" width="1" height="916" fill="#edeae6"/><rect x="1206" y="0" width="1" height="916" fill="#edeae6"/><rect x="1216" y="0" width="1" height="916" fill="#edeae6"/><rect x="1226" y="0" width="1" height="916" fill="#edeae6"/><rect x="1236" y="0" width="1" height="916" fill="#cfccc7"/><rect x="1246" y="0" width="1" height="916" fill="#edeae6"/><rect x="1256" y="0" width="1" height="916" fill="#edeae6"/><rect x="1266" y="0" width="1" height="916" fill="#edeae6"/><rect x="1276" y="0" width="1" height="916" fill="#edeae6"/><rect x="1286" y="0" width="1" height="916" fill="#edeae6"/><rect x="1296" y="0" width="1" height="916" fill="#edeae6"/><rect x="1306" y="0" width="1" height="916" fill="#edeae6"/><rect x="1316" y="0" width="1" height="916" fill="#edeae6"/><rect x="1326" y="0" width="1" height="916" fill="#edeae6"/><rect x="1336" y="0" width="1" height="916" fill="#cfccc7"/><rect x="1346" y="0" width="1" height="916" fill="#edeae6"/><rect x="1356" y="0" width="1" height="916" fill="#edeae6"/><rect x="1366" y="0" width="1" height="916" fill="#edeae6"/><rect x="1376" y="0" width="1" height="916" fill="#edeae6"/><rect x="1386" y="0" width="1" height="916" fill="#edeae6"/><rect x="1397" y="0" width="1" height="916" fill="#edeae6"/><rect x="1407" y="0" width="1" height="916" fill="#edeae6"/><rect x="1417" y="0" width="1" height="916" fill="#edeae6"/><rect x="1427" y="0" width="1" height="916" fill="#edeae6"/><rect x="1437" y="0" width="1" height="916" fill="#cfccc7"/><rect x="1447" y="0" width="1" height="916" fill="#edeae6"/><rect x="1457" y="0" width="1" height="916" fill="#edeae6"/><rect x="1467" y="0" width="1" height="916" fill="#edeae6"/><rect x="1477" y="0" width="1" height="916" fill="#edeae6"/><rect x="1487" y="0" width="1" height="916" fill="#edeae6"/><rect x="1497" y="0" width="1" height="916" fill="#edeae6"/><rect x="1507" y="0" width="1" height="916" fill="#edeae6"/><rect x="1517" y="0" width="1" height="916" fill="#edeae6"/><rect x="1527" y="0" width="1" height="916" fill="#edeae6"/><rect x="1537" y="0" width="1" height="916" fill="#cfccc7"/></svg><div class="a" style="left:164.00px;top:-17.00px;width:230.00px;height:325.00px;background:#fcfcab;border:1px solid #3d2a14"></div><div class="a" style="left:680.00px;top:-17.00px;width:230.00px;height:325.00px;background:#fcfcab;border:1px solid #3d2a14"></div><div class="a" style="left:1238.00px;top:-17.00px;width:230.00px;height:322.00px;background:#fcfcab;border:1px solid #3d2a14"></div><svg class="a" style="left:0;top:0" width="1542" height="915"><line x1="393" y1="14.5" x2="680" y2="14.5" stroke="#161620" stroke-width="1.1"/><line x1="393" y1="30.5" x2="680" y2="30.5" stroke="#161620" stroke-width="1.1"/><line x1="393" y1="48.5" x2="680" y2="48.5" stroke="#161620" stroke-width="1.1"/><line x1="393" y1="65.5" x2="680" y2="65.5" stroke="#161620" stroke-width="1.1"/><line x1="393" y1="82.5" x2="680" y2="82.5" stroke="#161620" stroke-width="1.1"/><line x1="393" y1="101.5" x2="680" y2="101.5" stroke="#161620" stroke-width="1.1"/><line x1="393" y1="119.5" x2="680" y2="119.5" stroke="#161620" stroke-width="1.1"/></svg><svg class="a" style="left:0;top:0" width="1542" height="915"><g transform="translate(-186,-77)" font-family="Liberation Serif"><text transform="translate(546,609.6) rotate(-90)" font-size="10.5" fill="#000040" textLength="66" lengthAdjust="spacingAndGlyphs">MMSZ5246BT1G</text><line x1="557.3" y1="580" x2="557.3" y2="639.3" stroke="#000070" stroke-width="1.1"/><path d="M548.3 611.5 L566.3 611.5 L557.3 600.5 Z" fill="#0000e6"/><line x1="548.3" y1="600.5" x2="566.3" y2="600.5" stroke="#0000e6" stroke-width="1.3"/><line x1="566.7" y1="578.5" x2="566.7" y2="631" stroke="#d9a46e" stroke-width="1"/><text transform="translate(566,630.4) rotate(-90)" font-size="10.5" fill="#000040" textLength="10" lengthAdjust="spacingAndGlyphs">D?</text><line x1="597.3" y1="540" x2="597.3" y2="639.3" stroke="#000070" stroke-width="1.1"/><rect x="593.3" y="576.3" width="8.200000000000045" height="21.0" fill="#fff" stroke="#1a1a90" stroke-width="1.2"/><line x1="602" y1="598" x2="602" y2="615" stroke="#d9a46e" stroke-width="1"/><text transform="translate(605.6,575.6) rotate(-90)" font-size="10.5" fill="#000040" textLength="35" lengthAdjust="spacingAndGlyphs">10K/0805</text><text transform="translate(605.6,614.8) rotate(-90)" font-size="10.5" fill="#000040" textLength="10.4" lengthAdjust="spacingAndGlyphs">R?</text><line x1="622.6" y1="539" x2="622.6" y2="574" stroke="#000070" stroke-width="1.1"/><line x1="622.6" y1="595.6" x2="622.6" y2="603" stroke="#000070" stroke-width="1.1"/><rect x="618.5" y="574" width="8.200000000000045" height="21.600000000000023" fill="#fff" stroke="#1a1a90" stroke-width="1.2"/><line x1="627" y1="596" x2="627" y2="605" stroke="#d9a46e" stroke-width="1"/><text transform="translate(630.5,575) rotate(-90)" font-size="10.5" fill="#000040" textLength="35" lengthAdjust="spacingAndGlyphs">2.4K/0805</text><text transform="translate(630.5,614.8) rotate(-90)" font-size="10.5" fill="#000040" textLength="10.4" lengthAdjust="spacingAndGlyphs">R?</text><line x1="642.6" y1="539" x2="642.6" y2="574" stroke="#000070" stroke-width="1.1"/><line x1="642.6" y1="595.6" x2="642.6" y2="603" stroke="#000070" stroke-width="1.1"/><rect x="638.5" y="574" width="8.200000000000045" height="21.600000000000023" fill="#fff" stroke="#1a1a90" stroke-width="1.2"/><line x1="647" y1="590" x2="647" y2="605" stroke="#d9a46e" stroke-width="1"/><rect x="643" y="542" width="12.6" height="31" fill="none" stroke="#4caf50" stroke-width="0.8"/><line x1="644.4" y1="523.7" x2="644.4" y2="623.7" stroke="#9a9a9a" stroke-width="0.8"/><text transform="translate(650.5,575) rotate(-90)" font-size="10.5" fill="#000040" textLength="35" lengthAdjust="spacingAndGlyphs">2.4K/0805</text><text transform="translate(650.5,614.8) rotate(-90)" font-size="10.5" fill="#000040" textLength="10.4" lengthAdjust="spacingAndGlyphs">R?</text><line x1="687.5" y1="539" x2="687.5" y2="628.6" stroke="#000070" stroke-width="1.1"/><rect x="683.4" y="574" width="8.200000000000045" height="21.600000000000023" fill="#fff" stroke="#1a1a90" stroke-width="1.2"/><line x1="692" y1="590" x2="692" y2="610" stroke="#d9a46e" stroke-width="1"/><text transform="translate(695.5,575) rotate(-90)" font-size="10.5" fill="#000040" textLength="35" lengthAdjust="spacingAndGlyphs">2.4K/0805</text><text transform="translate(695.5,614.8) rotate(-90)" font-size="10.5" fill="#000040" textLength="10.4" lengthAdjust="spacingAndGlyphs">R?</text><line x1="594" y1="573.3" x2="692" y2="573.3" stroke="#8a8a8a" stroke-width="0.8"/><line x1="665" y1="608.4" x2="709.6" y2="608.4" stroke="#d9a46e" stroke-width="1"/><line x1="678" y1="628.6" x2="697" y2="628.6" stroke="#000070" stroke-width="1.4"/><line x1="681" y1="631.6" x2="681" y2="640.6" stroke="#000070" stroke-width="1.1"/><line x1="694" y1="631.6" x2="694" y2="640.6" stroke="#000070" stroke-width="1.1"/><line x1="687.5" y1="631.6" x2="687.5" y2="640.6" stroke="#000070" stroke-width="1.1"/><path d="M685.0 636.6 L690.0 636.6 L687.5 632.6 Z" fill="#000070"/><line x1="676" y1="640.6" x2="699" y2="640.6" stroke="#000070" stroke-width="1.1"/><line x1="676" y1="640.6" x2="676" y2="645.6" stroke="#000070" stroke-width="1.1"/><line x1="699" y1="640.6" x2="699" y2="645.6" stroke="#000070" stroke-width="1.1"/><line x1="676" y1="645.6" x2="699" y2="645.6" stroke="#000070" stroke-width="1.1"/><path d="M684.5 642.1 L684.5 649.1 L690.5 645.6 Z" fill="#0000e6"/><line x1="690.5" y1="642.1" x2="690.5" y2="649.1" stroke="#0000e6" stroke-width="1.2"/><text x="665" y="638.6" font-size="10.5" fill="#000040" textLength="5" lengthAdjust="spacingAndGlyphs">3</text><text x="705" y="638.6" font-size="10.5" fill="#000040" textLength="5" lengthAdjust="spacingAndGlyphs">2</text><line x1="607.4" y1="640.3" x2="707.4" y2="640.3" stroke="#000070" stroke-width="1.1"/><text x="677" y="657.5" font-size="10" fill="#000040" textLength="11" lengthAdjust="spacingAndGlyphs">G?</text><text x="677" y="667.5" font-size="10.5" fill="#000040" textLength="49" lengthAdjust="spacingAndGlyphs">SFB040N100</text><text x="743.7" y="620.5" font-size="10.5" fill="#000040" textLength="15" lengthAdjust="spacingAndGlyphs">TP?</text><line x1="747.4" y1="626" x2="747.4" y2="670.4" stroke="#000070" stroke-width="1.1"/><line x1="747.4" y1="670.4" x2="727.4" y2="670.4" stroke="#000070" stroke-width="1.1"/><circle cx="747.4" cy="626" r="4.2" fill="#9a9a9a" stroke="#555" stroke-width="0.8"/><path d="M744 646 L747 644 L747 648 Z" fill="#333"/><line x1="767.4" y1="670.4" x2="828.9" y2="670.4" stroke="#000070" stroke-width="1.1"/><line x1="828.9" y1="670.4" x2="828.9" y2="640.3" stroke="#000070" stroke-width="1.1"/><line x1="787.4" y1="539.3" x2="908.6" y2="539.3" stroke="#000070" stroke-width="1.1"/><circle cx="817.8" cy="539.3" r="2.6" fill="#000070"/><circle cx="848.1" cy="539.3" r="2.6" fill="#000070"/><circle cx="878.2" cy="539.3" r="2.6" fill="#000070"/><line x1="787.4" y1="539.3" x2="787.4" y2="583" stroke="#000070" stroke-width="1.1"/><rect x="785.2" y="549.6" width="4.399999999999977" height="23.0" fill="#fff" stroke="#1a1a90" stroke-width="1.2"/><line x1="790.4" y1="550" x2="790.4" y2="583" stroke="#d9a46e" stroke-width="1"/><text x="791.4" y="557.5" font-size="10.5" fill="#000040" textLength="10" lengthAdjust="spacingAndGlyphs">R?</text><text transform="translate(796.4,625.2) rotate(-90)" font-size="10.5" fill="#000040" textLength="33" lengthAdjust="spacingAndGlyphs">2K/0805</text><line x1="818.5" y1="539.3" x2="818.5" y2="583" stroke="#000070" stroke-width="1.1"/><rect x="816.3" y="549.6" width="4.400000000000091" height="23.0" fill="#fff" stroke="#1a1a90" stroke-width="1.2"/><line x1="821.5" y1="550" x2="821.5" y2="583" stroke="#d9a46e" stroke-width="1"/><text x="822.5" y="557.5" font-size="10.5" fill="#000040" textLength="10" lengthAdjust="spacingAndGlyphs">R?</text><text transform="translate(827.5,625.2) rotate(-90)" font-size="10.5" fill="#000040" textLength="33" lengthAdjust="spacingAndGlyphs">2K/0805</text><line x1="848.9" y1="539.3" x2="848.9" y2="583" stroke="#000070" stroke-width="1.1"/><rect x="846.7" y="549.6" width="4.399999999999977" height="23.0" fill="#fff" stroke="#1a1a90" stroke-width="1.2"/><line x1="851.9" y1="550" x2="851.9" y2="583" stroke="#d9a46e" stroke-width="1"/><text x="852.9" y="557.5" font-size="10.5" fill="#000040" textLength="10" lengthAdjust="spacingAndGlyphs">R?</text><text transform="translate(857.9,625.2) rotate(-90)" font-size="10.5" fill="#000040" textLength="33" lengthAdjust="spacingAndGlyphs">2K/0805</text><line x1="848.9" y1="583" x2="848.9" y2="627" stroke="#000070" stroke-width="1.1"/><line x1="826" y1="608.4" x2="870.4" y2="608.4" stroke="#d9a46e" stroke-width="1"/><line x1="878.2" y1="539.3" x2="878.2" y2="639.3" stroke="#000070" stroke-width="1.1"/><path d="M868.9000000000001 601.5 L887.5 601.5 L878.2 590.4 Z" fill="#0000e6"/><line x1="868.9000000000001" y1="590.4" x2="887.5" y2="590.4" stroke="#0000e6" stroke-width="1.3"/><line x1="887.4" y1="569" x2="887.4" y2="621.5" stroke="#d9a46e" stroke-width="1"/><text transform="translate(896,609.6) rotate(-90)" font-size="10.5" fill="#000040" textLength="67" lengthAdjust="spacingAndGlyphs">MMSZ5246BT1G</text><text transform="translate(887,620.7) rotate(-90)" font-size="10.5" fill="#000040" textLength="10.5" lengthAdjust="spacingAndGlyphs">D?</text><line x1="908.6" y1="539.3" x2="908.6" y2="640" stroke="#000070" stroke-width="1.1"/><rect x="906.4" y="587.4" width="4.399999999999977" height="23.0" fill="#fff" stroke="#1a1a90" stroke-width="1.2"/><line x1="912" y1="567" x2="912" y2="622" stroke="#d9a46e" stroke-width="1"/><text transform="translate(916.5,583.7) rotate(-90)" font-size="10.5" fill="#000040" textLength="11.5" lengthAdjust="spacingAndGlyphs">1M</text><text x="911" y="594.5" font-size="10.5" fill="#000040" textLength="10" lengthAdjust="spacingAndGlyphs">R?</text><line x1="838.2" y1="627" x2="858.5" y2="627" stroke="#000070" stroke-width="1.4"/><line x1="841.2" y1="630" x2="841.2" y2="639" stroke="#000070" stroke-width="1.1"/><line x1="855.5" y1="630" x2="855.5" y2="639" stroke="#000070" stroke-width="1.1"/><line x1="848.35" y1="630" x2="848.35" y2="639" stroke="#000070" stroke-width="1.1"/><path d="M845.85 635 L850.85 635 L848.35 631 Z" fill="#000070"/><line x1="836.2" y1="639" x2="860.5" y2="639" stroke="#000070" stroke-width="1.1"/><line x1="836.2" y1="639" x2="836.2" y2="644" stroke="#000070" stroke-width="1.1"/><line x1="860.5" y1="639" x2="860.5" y2="644" stroke="#000070" stroke-width="1.1"/><line x1="836.2" y1="644" x2="860.5" y2="644" stroke="#000070" stroke-width="1.1"/><path d="M845.35 640.5 L845.35 647.5 L851.35 644 Z" fill="#0000e6"/><line x1="851.35" y1="640.5" x2="851.35" y2="647.5" stroke="#0000e6" stroke-width="1.2"/><text x="825" y="637" font-size="10.5" fill="#000040" textLength="5" lengthAdjust="spacingAndGlyphs">2</text><text x="866" y="637" font-size="10.5" fill="#000040" textLength="5" lengthAdjust="spacingAndGlyphs">3</text><line x1="828.9" y1="640.3" x2="868.1" y2="640.3" stroke="#000070" stroke-width="1.1"/><text x="837.8" y="657.5" font-size="10" fill="#000040" textLength="11" lengthAdjust="spacingAndGlyphs">G?</text><text x="837" y="667.5" font-size="10.5" fill="#000040" textLength="49" lengthAdjust="spacingAndGlyphs">SFB040N100</text><path d="M640 583 L640 600 L644 596.5 L647 603 L649.5 602 L646.5 595.5 L652 595.5 Z" fill="#fff" stroke="#111" stroke-width="0.9"/></g></svg></div><div class="a" style="left:186px;top:77px;width:1542px;height:916px;overflow:hidden"><div class="a" style="left:-186px;top:-77px;width:1728px;height:1080px"><div class="t" style="transform:scaleX(1.0053);transform-origin:0 0;left:411.50px;top:166.89px;font-family:'Liberation Serif',serif;font-size:27px;font-weight:normal;color:#d41010;">8串铁锂</div><div class="t" style="transform:scaleX(1.0248);transform-origin:0 0;left:915.50px;top:163.41px;font-family:'Liberation Serif',serif;font-size:26.5px;font-weight:normal;color:#cc1a0a;">AFE+MCU</div><div class="t" style="transform:scaleX(0.9831);transform-origin:0 0;left:932.50px;top:210.69px;font-family:'Liberation Serif',serif;font-size:45.5px;font-weight:normal;color:#0a10d0;">BMS</div><div class="t" style="transform:scaleX(1.0067);transform-origin:0 0;left:1474.00px;top:159.89px;font-family:'Liberation Serif',serif;font-size:27px;font-weight:normal;color:#c01f10;">LOAD</div><div class="t" style="transform:scaleX(0.9630);transform-origin:0 0;left:479.00px;top:387.59px;font-family:'Liberation Serif',serif;font-size:27px;font-weight:normal;color:#d01010;">B-</div><div class="a" style="left:540px;top:333.5px;width:0;height:0"><div class="t" style="left:0;top:0;transform:rotate(-90deg) scaleX(0.977);transform-origin:0 0;font-family:'Liberation Serif',serif;font-size:27px;color:#d41010;line-height:28px">8串 8节磷酸铁锂电池组</div></div></div></div><svg class="a" style="left:802px;top:81px" width="373" height="28"><rect x="0" y="0" width="373" height="28" rx="4" fill="#3b3b3b"/><path d="M11.399999999999999 8 L23.4 8 L18.9 14 L18.9 20 L15.899999999999999 20 L15.899999999999999 14 Z" fill="#6fb3d9"/><path d="M45.4 7 L45.4 21 M38.4 14 L52.4 14" stroke="#5c8fd6" stroke-width="1.4"/><path d="M55.4 26 L59.4 22 L59.4 26 Z" fill="#d0d0d0"/><rect x="67.3" y="7.5" width="13" height="13" fill="none" stroke="#7aa0d8" stroke-width="1.2" stroke-dasharray="2,1.5"/><path d="M83.8 26 L87.8 22 L87.8 26 Z" fill="#d0d0d0"/><g fill="#8a8a8a"><rect x="95" y="7" width="1.5" height="14"/><rect x="98" y="9" width="9" height="3"/><rect x="98" y="14" width="6" height="3"/></g><path d="M112 26 L116 22 L116 26 Z" fill="#d0d0d0"/><rect x="115" y="6" width="1.2" height="16" fill="#1e1e1e"/><rect x="127.19999999999999" y="6" width="8" height="16" fill="#e8c048" stroke="#8a6a20" stroke-width="0.8"/><g stroke="#e8a030" stroke-width="1.2"><line x1="124.19999999999999" y1="9" x2="127.19999999999999" y2="9"/><line x1="124.19999999999999" y1="13" x2="127.19999999999999" y2="13"/><line x1="124.19999999999999" y1="17" x2="127.19999999999999" y2="17"/><line x1="135.2" y1="9" x2="138.2" y2="9"/><line x1="135.2" y1="13" x2="138.2" y2="13"/><line x1="135.2" y1="17" x2="138.2" y2="17"/></g><path d="M151 11 Q155 7 159 11 Q163 15 167 11 M151 16 Q155 12 159 16 Q163 20 167 16" fill="none" stroke="#5a9ad8" stroke-width="1.6"/><path d="M169 26 L173 22 L173 26 Z" fill="#d0d0d0"/><g stroke="#d83a2a" stroke-width="1.3"><line x1="186.5" y1="6" x2="186.5" y2="14"/><line x1="178.5" y1="14" x2="194.5" y2="14"/><line x1="181.5" y1="17" x2="191.5" y2="17"/><line x1="184.0" y1="20" x2="189.0" y2="20"/></g><path d="M196.5 26 L200.5 22 L200.5 26 Z" fill="#d0d0d0"/><rect x="207" y="5" width="3" height="18" fill="#5a9ad8"/><g stroke="#5a78d0" stroke-width="1.2"><line x1="210" y1="14" x2="214" y2="14"/><line x1="215" y1="18" x2="217" y2="10"/><line x1="218" y1="18" x2="220" y2="10"/><line x1="221" y1="18" x2="223" y2="10"/></g><path d="M225 26 L229 22 L229 26 Z" fill="#d0d0d0"/><rect x="236" y="8" width="14" height="12" fill="#3ab060" stroke="#5aa0d8" stroke-width="1.2"/><g fill="#8ac0e8"><rect x="234" y="10" width="2" height="1.5"/><rect x="234" y="16" width="2" height="1.5"/><rect x="250" y="10" width="2" height="1.5"/><rect x="250" y="16" width="2" height="1.5"/></g><path d="M253 26 L257 22 L257 26 Z" fill="#d0d0d0"/><path d="M261 8 L273 8 L278 14 L273 20 L261 20 Z" fill="#e8c048"/><text x="263" y="17.5" font-family="Liberation Sans" font-size="8" fill="#333">D1</text><path d="M280 26 L284 22 L284 26 Z" fill="#d0d0d0"/><circle cx="299.3" cy="14" r="6.5" fill="none" stroke="#d83a2a" stroke-width="1.3"/><line x1="289.3" y1="14" x2="292.8" y2="14" stroke="#d83a2a" stroke-width="1.3"/><rect x="298.6" y="12" width="1.4" height="5" fill="#d83a2a"/><rect x="298.6" y="9.5" width="1.4" height="1.4" fill="#d83a2a"/><path d="M309.3 26 L313.3 22 L313.3 26 Z" fill="#d0d0d0"/><text x="320" y="22" font-family="Liberation Serif" font-size="20" font-weight="bold" fill="#4f86d0">A</text><path d="M337 26 L341 22 L341 26 Z" fill="#d0d0d0"/><path d="M347.2 21 L347.2 14 Q347.2 7 354.2 7 Q361.2 7 361.2 14 L361.2 21" fill="none" stroke="#5a8ad8" stroke-width="1.3"/><path d="M364.2 26 L368.2 22 L368.2 26 Z" fill="#d0d0d0"/></svg><div class="a" style="left:1146px;top:412px;width:390px;height:627px;background:rgba(30,29,28,0.665);border-radius:10px;backdrop-filter:blur(2.5px);-webkit-backdrop-filter:blur(2.5px)"></div><div class="t" style="transform:scaleX(0.9938);transform-origin:0 0;left:1159.00px;top:429.96px;font-family:'Liberation Sans',sans-serif;font-size:16px;font-weight:normal;color:#f4f4f4;-webkit-text-stroke:0.25px currentColor;">互动消息区</div><svg class="a" style="left:1450px;top:428px" width="76" height="18"><rect x="2.5" y="8" width="11" height="8" rx="1.5" fill="none" stroke="#f0f0f0" stroke-width="1.5"/><path d="M11 8 L11 5 Q11 1.5 14 1.5 Q17 1.5 17 4.5" fill="none" stroke="#f0f0f0" stroke-width="1.5"/><path d="M37 2 L43 5.5 L43 12.5 L37 16 L31 12.5 L31 5.5 Z" fill="none" stroke="#f0f0f0" stroke-width="1.5"/><circle cx="37" cy="9" r="2.2" fill="none" stroke="#f0f0f0" stroke-width="1.5"/><path d="M59 3 L70 14 M70 3 L59 14" stroke="#f0f0f0" stroke-width="1.6"/></svg><svg class="a" style="left:1159px;top:478px" width="135" height="17"><path d="M1 7 L4 7 L4 15 L1 15 Z M5 7 L8 1.5 Q10 1 10 3.5 L9.5 6 L14 6 Q15.5 6.5 15 8 L13.5 14 Q13 15 12 15 L5 15 Z" fill="none" stroke="#cfcfcf" stroke-width="1.3"/><circle cx="55" cy="5" r="3.5" fill="none" stroke="#cfcfcf" stroke-width="1.3"/><path d="M49 15 Q49 9.5 55 9.5 Q61 9.5 61 15 Z" fill="none" stroke="#cfcfcf" stroke-width="1.3"/><path d="M60 2 Q63 4 60 8 M62 10 Q64.5 11 64.5 14" fill="none" stroke="#cfcfcf" stroke-width="1.3"/><rect x="98" y="6" width="13" height="9" fill="none" stroke="#cfcfcf" stroke-width="1.3"/><line x1="97" y1="9" x2="112" y2="9" stroke="#cfcfcf" stroke-width="1.3"/><path d="M104.5 6 Q101 0.5 99.5 3.5 Q100 6 104.5 6 Q109 6 109.5 3.5 Q108 0.5 104.5 6" fill="none" stroke="#cfcfcf" stroke-width="1.2"/><line x1="104.5" y1="9" x2="104.5" y2="15" stroke="#cfcfcf" stroke-width="1.1"/></svg><div class="t" style="transform:scaleX(0.8345);transform-origin:0 0;left:1179.50px;top:479.65px;font-family:'Liberation Sans',sans-serif;font-size:14px;font-weight:normal;color:#d8d8d8;-webkit-text-stroke:0.25px currentColor;">77</div><div class="t" style="transform:scaleX(0.8937);transform-origin:0 0;left:1227.50px;top:479.65px;font-family:'Liberation Sans',sans-serif;font-size:14px;font-weight:normal;color:#d8d8d8;-webkit-text-stroke:0.25px currentColor;">11</div><div class="t" style="transform:scaleX(0.8345);transform-origin:0 0;left:1275.50px;top:479.65px;font-family:'Liberation Sans',sans-serif;font-size:14px;font-weight:normal;color:#d8d8d8;-webkit-text-stroke:0.25px currentColor;">31</div><svg class="a" style="left:1352px;top:476px" width="20" height="20" viewBox="0 0 20 20"><path d="M11 14 Q14 17 17 16 Q15 13 11 14Z" fill="#3a9a5a"/><path d="M6 15 Q5 18 8 19 Q9 16 6 15Z" fill="#2f7a4a"/><path d="M3 8 Q3 2 9 2 Q15 1 16 7 Q16 13 10 15 Q4 15 3 8Z" fill="#e02a3a"/><path d="M6 6 Q9 3 13 6 M5 9 Q9 6 14 9 M7 12 Q10 9 13 11" stroke="#ff7a86" stroke-width="1.1" fill="none"/><path d="M4 10 Q6 14 10 14" stroke="#a01020" stroke-width="1" fill="none"/></svg><div class="t" style="transform:scaleX(0.8987);transform-origin:0 0;left:1377.00px;top:479.65px;font-family:'Liberation Sans',sans-serif;font-size:14px;font-weight:normal;color:#f0d040;-webkit-text-stroke:0.25px currentColor;">30</div><div class="t" style="transform:scaleX(1.0016);transform-origin:0 0;left:1391.00px;top:479.65px;font-family:'Liberation Sans',sans-serif;font-size:14px;font-weight:normal;color:#e0e0e0;-webkit-text-stroke:0.25px currentColor;">/30</div><svg class="a" style="left:1418px;top:477px" width="19" height="18"><rect x="3" y="6" width="11" height="11" rx="2" fill="#e8a020"/><path d="M14 8 Q18 8 18 12 Q18 15 14 15" fill="none" stroke="#d89018" stroke-width="2"/><ellipse cx="8.5" cy="5" rx="7" ry="4.5" fill="#f6f2e8"/><rect x="5" y="9" width="2" height="7" fill="#f8c850"/></svg><div class="t" style="transform:scaleX(0.9908);transform-origin:0 0;left:1442.00px;top:479.65px;font-family:'Liberation Sans',sans-serif;font-size:14px;font-weight:normal;color:#e0e0e0;-webkit-text-stroke:0.25px currentColor;">0/20</div><svg class="a" style="left:1477px;top:479px" width="20" height="13"><path d="M2 9 L13 2 Q18 1 18 4 L8 11 Q3 13 2 9Z" fill="#4840b8"/><path d="M5 8 L14 3" stroke="#8a80f0" stroke-width="1.2"/></svg><div class="t" style="transform:scaleX(0.9725);transform-origin:0 0;left:1500.50px;top:479.65px;font-family:'Liberation Sans',sans-serif;font-size:14px;font-weight:normal;color:#e0e0e0;-webkit-text-stroke:0.25px currentColor;">0/10</div><div class="a" style="left:1155px;top:517px;width:135px;height:27.5px;background:linear-gradient(90deg,rgba(40,40,40,0.45),rgba(40,40,40,0.35) 70%,rgba(40,40,40,0));border-radius:5px"></div><div class="t" style="transform:scaleX(0.9116);transform-origin:0 0;left:1167.00px;top:525.92px;font-family:'Liberation Sans',sans-serif;font-size:12.5px;font-weight:normal;color:#dcdcdc;-webkit-text-stroke:0.25px currentColor;">YOU</div><div class="t" style="transform:scaleX(0.9487);transform-origin:0 0;left:1198.00px;top:525.92px;font-family:'Liberation Sans',sans-serif;font-size:12.5px;font-weight:normal;color:#f2c4d0;-webkit-text-stroke:0.25px currentColor;">小心心</div><svg class="a" style="left:1242px;top:522px" width="19" height="18"><path d="M9.5 16 L2 8 Q0 3 4.5 1.5 Q8 1 9.5 4 Q11 1 14.5 1.5 Q19 3 17 8 Z" fill="#d82a78"/><path d="M9.5 16 L5 8 L9.5 4 L14 8Z" fill="#b01860" opacity="0.7"/><path d="M3.5 5 Q5.5 2.5 8 4.5" stroke="#ff9ac8" stroke-width="1.4" fill="none"/></svg><div class="t" style="transform:scaleX(0.9846);transform-origin:0 0;left:1266.00px;top:525.92px;font-family:'Liberation Sans',sans-serif;font-size:12.5px;font-weight:normal;color:#f2c4d0;-webkit-text-stroke:0.25px currentColor;">x1</div><div class="a" style="left:1155px;top:549.4px;width:135px;height:27.5px;background:linear-gradient(90deg,rgba(40,40,40,0.45),rgba(40,40,40,0.35) 70%,rgba(40,40,40,0));border-radius:5px"></div><div class="t" style="transform:scaleX(0.9116);transform-origin:0 0;left:1167.00px;top:558.32px;font-family:'Liberation Sans',sans-serif;font-size:12.5px;font-weight:normal;color:#dcdcdc;-webkit-text-stroke:0.25px currentColor;">YOU</div><div class="t" style="transform:scaleX(0.9615);transform-origin:0 0;left:1198.00px;top:558.32px;font-family:'Liberation Sans',sans-serif;font-size:12.5px;font-weight:normal;color:#f2c4d0;-webkit-text-stroke:0.25px currentColor;">玫瑰</div><svg class="a" style="left:1228px;top:553.4px" width="21.0" height="21.0" viewBox="0 0 20 20"><path d="M11 14 Q14 17 17 16 Q15 13 11 14Z" fill="#3a9a5a"/><path d="M6 15 Q5 18 8 19 Q9 16 6 15Z" fill="#2f7a4a"/><path d="M3 8 Q3 2 9 2 Q15 1 16 7 Q16 13 10 15 Q4 15 3 8Z" fill="#e02a3a"/><path d="M6 6 Q9 3 13 6 M5 9 Q9 6 14 9 M7 12 Q10 9 13 11" stroke="#ff7a86" stroke-width="1.1" fill="none"/><path d="M4 10 Q6 14 10 14" stroke="#a01020" stroke-width="1" fill="none"/></svg><div class="t" style="transform:scaleX(1.0171);transform-origin:0 0;left:1254.60px;top:558.32px;font-family:'Liberation Sans',sans-serif;font-size:12.5px;font-weight:normal;color:#f2c4d0;-webkit-text-stroke:0.25px currentColor;">x30</div><svg class="a" style="left:1165px;top:654px" width="20" height="20"><circle cx="10" cy="10" r="9.5" fill="#d8d8d8"/><path d="M4 14 Q6 8 10 9 Q14 6 16 12 Q13 17 8 16Z" fill="#333"/><circle cx="12" cy="5" r="2.5" fill="#222"/><path d="M3 16 Q10 19 17 16" stroke="#eee" stroke-width="2" fill="none"/></svg><div class="a" style="left:1189px;top:654px;width:34px;height:20px;background:#c9c9c9;border-radius:3px"></div><div class="t" style="transform:scaleX(0.9465);transform-origin:0 0;left:1193.00px;top:657.50px;font-family:'Liberation Sans',sans-serif;font-size:13px;font-weight:normal;color:#1e1e1e;-webkit-text-stroke:0.25px currentColor;">90后</div><div class="t" style="transform:scaleX(0.9361);transform-origin:0 0;left:1165.00px;top:685.72px;font-family:'Liberation Sans',sans-serif;font-size:12.5px;font-weight:normal;color:#f2f2f2;-webkit-text-stroke:0.25px currentColor;">光伏MPPT光伏控开关电源设计/BMS锂电池管理系统开发</div><div class="a" style="left:1523.5px;top:707px;width:5px;height:239px;background:#8c8c8c;border-radius:3px"></div><div class="a" style="left:1157px;top:720.0px;width:36px;height:15px;background:linear-gradient(90deg,#5d7fcc,#5068b2);border-radius:8px"></div><svg class="a" style="left:1157px;top:719.0px" width="18" height="17"><path d="M3 8 L9 2 L15 8 L9 14 Z" fill="#b8d0ff"/><path d="M3 8 L15 8 L9 14Z" fill="#8aa8f0"/></svg><div class="t" style="transform:scaleX(1.0480);transform-origin:0 0;left:1175.50px;top:721.84px;font-family:'Liberation Sans',sans-serif;font-size:12px;font-weight:bold;color:#f4f6ff;-webkit-text-stroke:0.25px currentColor;">10</div><div class="a" style="left:1197px;top:720.0px;width:50px;height:15px;background:#b0953e;border-radius:8px"></div><svg class="a" style="left:1200px;top:721.0px" width="14" height="13"><path d="M7 1 Q12 1 12 6 Q12 11 7 12 Q2 11 2 6 Q2 1 7 1Z" fill="#f0d070"/><path d="M7 4 L7 10" stroke="#b08020" stroke-width="1.5"/></svg><div class="t" style="transform:scaleX(0.7667);transform-origin:0 0;left:1217.00px;top:723.46px;font-family:'Liberation Sans',sans-serif;font-size:9.5px;font-weight:normal;color:#fbefc0;-webkit-text-stroke:0.25px currentColor;">大源子</div><div class="t" style="transform:scaleX(0.9845);transform-origin:0 0;left:1251.00px;top:721.72px;font-family:'Liberation Sans',sans-serif;font-size:12.5px;font-weight:normal;color:#7ecbe0;-webkit-text-stroke:0.25px currentColor;">用户3881490305732:</div><div class="t" style="transform:scaleX(0.9320);transform-origin:0 0;left:1372.00px;top:721.72px;font-family:'Liberation Sans',sans-serif;font-size:12.5px;font-weight:normal;color:#f0f0f0;-webkit-text-stroke:0.25px currentColor;">请问为什么芯片的充电CH</div><div class="a" style="left:1157px;top:771.1px;width:36px;height:15px;background:linear-gradient(90deg,#5d7fcc,#5068b2);border-radius:8px"></div><svg class="a" style="left:1157px;top:770.1px" width="18" height="17"><path d="M3 8 L9 2 L15 8 L9 14 Z" fill="#b8d0ff"/><path d="M3 8 L15 8 L9 14Z" fill="#8aa8f0"/></svg><div class="t" style="transform:scaleX(1.0480);transform-origin:0 0;left:1175.50px;top:772.94px;font-family:'Liberation Sans',sans-serif;font-size:12px;font-weight:bold;color:#f4f6ff;-webkit-text-stroke:0.25px currentColor;">10</div><div class="a" style="left:1197px;top:771.1px;width:50px;height:15px;background:#b0953e;border-radius:8px"></div><svg class="a" style="left:1200px;top:772.1px" width="14" height="13"><path d="M7 1 Q12 1 12 6 Q12 11 7 12 Q2 11 2 6 Q2 1 7 1Z" fill="#f0d070"/><path d="M7 4 L7 10" stroke="#b08020" stroke-width="1.5"/></svg><div class="t" style="transform:scaleX(0.7667);transform-origin:0 0;left:1217.00px;top:774.56px;font-family:'Liberation Sans',sans-serif;font-size:9.5px;font-weight:normal;color:#fbefc0;-webkit-text-stroke:0.25px currentColor;">大源子</div><div class="t" style="transform:scaleX(0.9845);transform-origin:0 0;left:1251.00px;top:772.82px;font-family:'Liberation Sans',sans-serif;font-size:12.5px;font-weight:normal;color:#7ecbe0;-webkit-text-stroke:0.25px currentColor;">用户3881490305732:</div><div class="t" style="transform:scaleX(0.9615);transform-origin:0 0;left:1372.00px;top:772.82px;font-family:'Liberation Sans',sans-serif;font-size:12.5px;font-weight:normal;color:#f0f0f0;-webkit-text-stroke:0.25px currentColor;">嗯，是的</div><div class="a" style="left:1157px;top:801.2px;width:36px;height:15px;background:linear-gradient(90deg,#5d7fcc,#5068b2);border-radius:8px"></div><svg class="a" style="left:1157px;top:800.2px" width="18" height="17"><path d="M3 8 L9 2 L15 8 L9 14 Z" fill="#b8d0ff"/><path d="M3 8 L15 8 L9 14Z" fill="#8aa8f0"/></svg><div class="t" style="transform:scaleX(1.0480);transform-origin:0 0;left:1175.50px;top:803.04px;font-family:'Liberation Sans',sans-serif;font-size:12px;font-weight:bold;color:#f4f6ff;-webkit-text-stroke:0.25px currentColor;">10</div><div class="a" style="left:1197px;top:801.2px;width:50px;height:15px;background:#b0953e;border-radius:8px"></div><svg class="a" style="left:1200px;top:802.2px" width="14" height="13"><path d="M7 1 Q12 1 12 6 Q12 11 7 12 Q2 11 2 6 Q2 1 7 1Z" fill="#f0d070"/><path d="M7 4 L7 10" stroke="#b08020" stroke-width="1.5"/></svg><div class="t" style="transform:scaleX(0.7667);transform-origin:0 0;left:1217.00px;top:804.66px;font-family:'Liberation Sans',sans-serif;font-size:9.5px;font-weight:normal;color:#fbefc0;-webkit-text-stroke:0.25px currentColor;">大源子</div><div class="t" style="transform:scaleX(0.9845);transform-origin:0 0;left:1251.00px;top:802.92px;font-family:'Liberation Sans',sans-serif;font-size:12.5px;font-weight:normal;color:#7ecbe0;-webkit-text-stroke:0.25px currentColor;">用户3881490305732:</div><div class="t" style="transform:scaleX(0.9692);transform-origin:0 0;left:1372.00px;top:802.92px;font-family:'Liberation Sans',sans-serif;font-size:12.5px;font-weight:normal;color:#f0f0f0;-webkit-text-stroke:0.25px currentColor;">好的，感谢</div><div class="t" style="transform:scaleX(0.9511);transform-origin:0 0;left:1157.00px;top:743.22px;font-family:'Liberation Sans',sans-serif;font-size:12.5px;font-weight:normal;color:#f0f0f0;-webkit-text-stroke:0.25px currentColor;">G引脚要经过个pnp三极管才到充电mos的g极啊</div><div class="a" style="left:1157px;top:831px;width:36px;height:15px;background:linear-gradient(90deg,#5d7fcc,#5068b2);border-radius:8px"></div><svg class="a" style="left:1157px;top:830px" width="18" height="17"><path d="M3 8 L9 2 L15 8 L9 14 Z" fill="#b8d0ff"/><path d="M3 8 L15 8 L9 14Z" fill="#8aa8f0"/></svg><div class="t" style="transform:scaleX(1.0467);transform-origin:0 0;left:1175.50px;top:832.84px;font-family:'Liberation Sans',sans-serif;font-size:12px;font-weight:bold;color:#f4f6ff;-webkit-text-stroke:0.25px currentColor;">8</div><div class="t" style="transform:scaleX(0.7692);transform-origin:0 0;left:1196.70px;top:832.72px;font-family:'Liberation Sans',sans-serif;font-size:12.5px;font-weight:normal;color:#7ecbe0;-webkit-text-stroke:0.25px currentColor;">御风、</div><div class="t" style="transform:scaleX(1.1749);transform-origin:0 0;left:1226.00px;top:832.72px;font-family:'Liberation Sans',sans-serif;font-size:12.5px;font-weight:normal;color:#f0f0f0;-webkit-text-stroke:0.25px currentColor;">: BMS</div><div class="a" style="left:1157px;top:861.5px;width:36px;height:15px;background:linear-gradient(90deg,#6a5ad8,#5a48c8);border-radius:8px"></div><svg class="a" style="left:1157px;top:860.5px" width="18" height="17"><path d="M9 2 L15 5.5 L15 11.5 L9 15 L3 11.5 L3 5.5 Z" fill="#e8a0e8"/><circle cx="9" cy="8.5" r="3" fill="#c060d0"/></svg><div class="t" style="transform:scaleX(1.0480);transform-origin:0 0;left:1175.50px;top:863.34px;font-family:'Liberation Sans',sans-serif;font-size:12px;font-weight:bold;color:#f4f6ff;-webkit-text-stroke:0.25px currentColor;">21</div><div class="t" style="transform:scaleX(0.9700);transform-origin:0 0;left:1196.70px;top:863.22px;font-family:'Liberation Sans',sans-serif;font-size:12.5px;font-weight:normal;color:#7ecbe0;-webkit-text-stroke:0.25px currentColor;">Ypa! 豹锅:</div><div class="t" style="transform:scaleX(0.9538);transform-origin:0 0;left:1256.00px;top:863.22px;font-family:'Liberation Sans',sans-serif;font-size:12.5px;font-weight:normal;color:#f0f0f0;-webkit-text-stroke:0.25px currentColor;">铁锂和三元电压不同么</div><div class="a" style="left:1157px;top:892.5px;width:36px;height:15px;background:linear-gradient(90deg,#6a5ad8,#5a48c8);border-radius:8px"></div><svg class="a" style="left:1157px;top:891.5px" width="18" height="17"><path d="M9 2 L15 5.5 L15 11.5 L9 15 L3 11.5 L3 5.5 Z" fill="#e8a0e8"/><circle cx="9" cy="8.5" r="3" fill="#c060d0"/></svg><div class="t" style="transform:scaleX(1.0480);transform-origin:0 0;left:1175.50px;top:894.34px;font-family:'Liberation Sans',sans-serif;font-size:12px;font-weight:bold;color:#f4f6ff;-webkit-text-stroke:0.25px currentColor;">21</div><div class="t" style="transform:scaleX(0.9700);transform-origin:0 0;left:1196.70px;top:894.22px;font-family:'Liberation Sans',sans-serif;font-size:12.5px;font-weight:normal;color:#7ecbe0;-webkit-text-stroke:0.25px currentColor;">Ypa! 豹锅:</div><div class="t" style="transform:scaleX(0.9821);transform-origin:0 0;left:1256.00px;top:894.22px;font-family:'Liberation Sans',sans-serif;font-size:12.5px;font-weight:normal;color:#f0f0f0;-webkit-text-stroke:0.25px currentColor;">三元好像只有6节24v</div><div class="a" style="left:1157px;top:926.5px;width:36px;height:15px;background:linear-gradient(90deg,#6a7ed8,#5a6ac8);border-radius:8px"></div><svg class="a" style="left:1157px;top:925.5px" width="18" height="17"><path d="M9 2 L15 6 L13 14 L5 14 L3 6 Z" fill="#c8d8ff"/></svg><div class="t" style="transform:scaleX(1.1034);transform-origin:0 0;left:1175.50px;top:928.34px;font-family:'Liberation Sans',sans-serif;font-size:12px;font-weight:bold;color:#f4f6ff;-webkit-text-stroke:0.25px currentColor;">11</div><div class="t" style="transform:scaleX(0.9385);transform-origin:0 0;left:1196.70px;top:928.22px;font-family:'Liberation Sans',sans-serif;font-size:12.5px;font-weight:normal;color:#7ecbe0;-webkit-text-stroke:0.25px currentColor;">薛定谔滴猫</div><div class="t" style="transform:scaleX(0.9231);transform-origin:0 0;left:1260.00px;top:928.22px;font-family:'Liberation Sans',sans-serif;font-size:12.5px;font-weight:normal;color:#f0f0f0;-webkit-text-stroke:0.25px currentColor;">来了</div><div class="a" style="left:1155px;top:965px;width:372px;height:33px;background:rgba(30,30,30,0.5);border-radius:6px"></div><div class="t" style="transform:scaleX(0.8971);transform-origin:0 0;left:1166.60px;top:976.22px;font-family:'Liberation Sans',sans-serif;font-size:12.5px;font-weight:normal;color:#8e8e8e;-webkit-text-stroke:0.25px currentColor;">说点什么...</div><div class="t" style="transform:scaleX(0.9423);transform-origin:0 0;left:1490.70px;top:976.22px;font-family:'Liberation Sans',sans-serif;font-size:12.5px;font-weight:normal;color:#6c6c6c;-webkit-text-stroke:0.25px currentColor;">发送</div><div class="t" style="transform:scaleX(0.9719);transform-origin:0 0;left:1154.40px;top:1017.72px;font-family:'Liberation Sans',sans-serif;font-size:12.5px;font-weight:normal;color:#cfcfcf;-webkit-text-stroke:0.25px currentColor;">延迟 3ms</div><div class="t" style="transform:scaleX(0.9615);transform-origin:0 0;left:1226.00px;top:1017.72px;font-family:'Liberation Sans',sans-serif;font-size:12.5px;font-weight:normal;color:#cfcfcf;-webkit-text-stroke:0.25px currentColor;">CPU 1.26%</div><div class="t" style="transform:scaleX(1.0160);transform-origin:0 0;left:1308.50px;top:1017.72px;font-family:'Liberation Sans',sans-serif;font-size:12.5px;font-weight:normal;color:#cfcfcf;-webkit-text-stroke:0.25px currentColor;">码率 4584kb/s</div><div class="t" style="transform:scaleX(0.9823);transform-origin:0 0;left:1409.70px;top:1017.72px;font-family:'Liberation Sans',sans-serif;font-size:12.5px;font-weight:normal;color:#cfcfcf;-webkit-text-stroke:0.25px currentColor;">帧率 30fps</div>
</body></html>
